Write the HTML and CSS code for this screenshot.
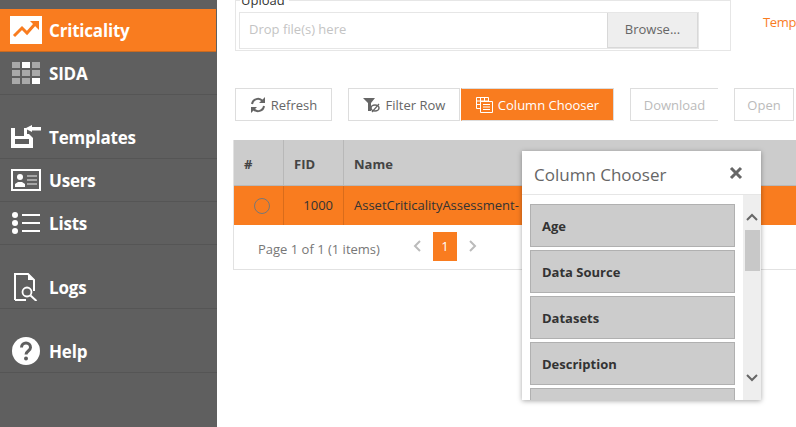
FILE: index.html
```html
<!DOCTYPE html>
<html lang="en">
<head>
    <meta charset="UTF-8">
    <meta name="viewport" content="width=device-width, initial-scale=1.0">
    <title>Criticality</title>
    <link rel="stylesheet" href="styles.css">
</head>
<body>
    <div class="sidebar">
        <div class="nav-group">
            <a class="nav-item active">
                <span class="nav-icon">
                    <svg width="32" height="28" viewBox="0 0 32 28"><rect width="32" height="28" fill="#fff"/><path d="M4 20l8-8 5 5 8-9" fill="none" stroke="#f97c1f" stroke-width="3"/><path d="M20 5h9v9z" fill="#f97c1f"/></svg>
                </span>
                Criticality
            </a>
            <a class="nav-item">
                <span class="nav-icon">
                    <svg width="28" height="22" viewBox="0 0 28 22">
                        <path fill="#a9a9a9" d="M0 0h8v6H0zM20 0h8v6h-8zM0 8h8v6H0zM10 8h8v6h-8zM20 8h8v6h-8zM0 16h8v6H0zM10 16h8v6h-8z"/>
                        <path fill="#fff" d="M10 0h8v6h-8zM20 16h8v6h-8z"/>
                    </svg>
                </span>
                SIDA
            </a>
        </div>
        <div class="nav-group">
            <a class="nav-item">
                <span class="nav-icon">
                    <svg width="30" height="24" viewBox="0 0 30 24"><path fill="#fff" fill-rule="evenodd" d="M0 3h4v8h9V3h3v6h2l4 4v10H0zM4 14v5h14v-5z"/><path fill="#fff" d="M14 3.500L21 0v2h9v3.500h-9V7z"/></svg>
                </span>
                Templates
            </a>
            <a class="nav-item">
                <span class="nav-icon">
                    <svg width="30" height="22" viewBox="0 0 30 22"><rect x="1" y="1" width="28" height="20" fill="none" stroke="#fff" stroke-width="2"/><circle cx="9" cy="8" r="3" fill="#fff"/><path fill="#fff" d="M4 18v-3l3-2h4l3 2v3z"/><path stroke="#bdbdbd" stroke-width="1.6" d="M16 7h10M16 11h10M16 15h10"/></svg>
                </span>
                Users
            </a>
            <a class="nav-item">
                <span class="nav-icon">
                    <svg width="28" height="22" viewBox="0 0 28 22"><circle cx="3" cy="3" r="3" fill="#fff"/><circle cx="3" cy="11" r="3" fill="#fff"/><circle cx="3" cy="19" r="3" fill="#fff"/><path stroke="#fff" stroke-width="2" d="M10 3h18M10 11h18M10 19h18"/></svg>
                </span>
                Lists
            </a>
        </div>
        <div class="nav-group">
            <a class="nav-item">
                <span class="nav-icon">
                    <svg width="24" height="28" viewBox="0 0 24 28"><path d="M1 27V1h13l6 6v11M1 27h11" fill="none" stroke="#fff" stroke-width="2"/><path d="M14 1l6 6h-6z" fill="#fff"/><circle cx="13" cy="19" r="4.500" fill="none" stroke="#fff" stroke-width="1.800"/><path d="M16.500 22.500l6 5.500" stroke="#fff" stroke-width="2"/></svg>
                </span>
                Logs
            </a>
        </div>
        <div class="nav-group">
            <a class="nav-item">
                <span class="nav-icon">
                    <svg width="28" height="28" viewBox="0 0 28 28"><circle cx="14" cy="14" r="14" fill="#fff"/><path d="M9.500 10.500c0-6 9-6 9 0 0 3.500-4.500 3.500-4.500 7" fill="none" stroke="#5f5f5f" stroke-width="3"/><circle cx="14" cy="21.500" r="2" fill="#5f5f5f"/></svg>
                </span>
                Help
            </a>
        </div>
    </div>

    <div class="main">
        <div class="upload-row">
            <fieldset class="upload">
                <legend>Upload</legend>
                <div class="file-input">
                    <div class="drop">Drop file(s) here</div>
                    <div class="browse">Browse...</div>
                </div>
            </fieldset>
            <a class="templates-link">Temp</a>
        </div>

        <div class="toolbar">
            <button class="btn btn-refresh">
                <svg width="16" height="16" viewBox="0 0 16 16"><path d="M2 7a6 6 0 0 1 10.500-3M14 9a6 6 0 0 1-10.500 3" fill="none" stroke="#666" stroke-width="2"/><path d="M15 0v6H9zM1 16v-6h6z" fill="#666"/></svg>
                Refresh
            </button>
            <div class="btn-pair">
                <button class="btn btn-filter">
                    <svg width="18" height="16" viewBox="0 0 18 16"><path d="M0 1h12L8 6v8H5V6z" fill="#666"/><ellipse cx="12" cy="11" rx="4" ry="3" fill="none" stroke="#666" stroke-width="1.500"/><path d="M9 15l7-8" stroke="#666" stroke-width="1.200"/></svg>
                    Filter Row
                </button>
                <button class="btn btn-active">
                    <svg width="17" height="16" viewBox="0 0 17 16"><path d="M.5.500h12v11H.5zM.5 4h12M.5 7.500h12M4.500.5v11M8.500.5v11" fill="none" stroke="#fff"/><path d="M4.500 4.500h12v11h-12z" fill="#f97c1f" stroke="#fff"/><path d="M7 7.500h7M7 10h7M7 12.500h7" stroke="#fff"/></svg>
                    Column Chooser
                </button>
            </div>
            <button class="btn btn-disabled btn-download">Download</button>
            <button class="btn btn-disabled btn-open">Open</button>
        </div>

        <div class="grid">
            <div class="grid-row grid-head">
                <div class="cell col-num">#</div>
                <div class="cell col-fid">FID</div>
                <div class="cell col-name">Name</div>
            </div>
            <div class="grid-row grid-selected">
                <div class="cell col-num"><span class="radio"></span></div>
                <div class="cell col-fid">1000</div>
                <div class="cell col-name">AssetCriticalityAssessment-</div>
            </div>
            <div class="pager">
                <span class="pager-info">Page 1 of 1 (1 items)</span>
                <svg class="chev" width="8" height="12" viewBox="0 0 8 12"><path d="M7 1L2 6l5 5" fill="none" stroke="#bbb" stroke-width="2"/></svg>
                <span class="page-num">1</span>
                <svg class="chev" width="8" height="12" viewBox="0 0 8 12"><path d="M1 1l5 5-5 5" fill="none" stroke="#bbb" stroke-width="2"/></svg>
            </div>
        </div>

        <div class="chooser">
            <div class="chooser-head">
                <span class="chooser-title">Column Chooser</span>
                <svg width="14" height="14" viewBox="0 0 14 14"><path d="M2 2l10 10M12 2L2 12" stroke="#666" stroke-width="3"/></svg>
            </div>
            <div class="chooser-body">
                <div class="chooser-list">
                    <div class="chooser-item">Age</div>
                    <div class="chooser-item">Data Source</div>
                    <div class="chooser-item">Datasets</div>
                    <div class="chooser-item">Description</div>
                    <div class="chooser-item"></div>
                </div>
                <div class="scrollbar">
                    <svg width="12" height="8" viewBox="0 0 12 8"><path d="M1 7l5-5 5 5" fill="none" stroke="#666" stroke-width="2"/></svg>
                    <div class="thumb"></div>
                    <svg class="arrow-down" width="12" height="8" viewBox="0 0 12 8"><path d="M1 1l5 5 5-5" fill="none" stroke="#666" stroke-width="2"/></svg>
                </div>
            </div>
        </div>
    </div>
</body>
</html>
```

FILE: styles.css
```css
html, body {
    height: 100%;
}

body {
    margin: 0;
    display: flex;
    overflow: hidden;
    background-color: #fff;
    color: #666;
    font-family: "Open Sans", "Liberation Sans", sans-serif;
    font-size: 13px;
}

.sidebar {
    flex: 0 0 217px;
    box-sizing: border-box;
    padding-top: 9px;
    background-color: #5f5f5f;
}

.nav-group {
    margin-bottom: 21px;
}

.nav-item {
    display: flex;
    align-items: center;
    box-sizing: border-box;
    height: 43px;
    border-bottom: 1px solid #555;
    color: #fff;
    font-size: 17px;
    font-weight: 700;
    letter-spacing: -0.2px;
}

.nav-item.active {
    background-color: #f97c1f;
    border-bottom-color: #c96a20;
    margin-right: 1px;
}

.nav-icon {
    display: flex;
    justify-content: center;
    width: 32px;
    margin: 0 7px 0 10px;
}

.main {
    position: relative;
    flex: 1;
    min-width: 0;
    overflow: hidden;
}

.upload-row {
    display: flex;
    align-items: flex-start;
    height: 51px;
    margin-top: -10px;
    padding: 0 0 10px 18px;
}

.upload {
    flex: 0 0 496px;
    box-sizing: border-box;
    height: 61px;
    margin: 0;
    padding: 2px 31px 0 3px;
    border: 1px solid #e6e6e6;
}

.upload legend {
    margin-left: 1px;
    padding: 0 4px 0 1px;
    color: #333;
    font-size: 13px;
    line-height: 20px;
}

.file-input {
    display: flex;
    height: 35px;
    border: 1px solid #e6e6e6;
}

.drop {
    flex: 1;
    padding-left: 9px;
    color: #c4c4c4;
    line-height: 33px;
}

.browse {
    box-sizing: border-box;
    width: 91px;
    background-color: #eee;
    border: 1px solid #d8d8d8;
    border-width: 0 1px 1px 1px;
    text-align: center;
    line-height: 32px;
}

.templates-link {
    margin: 23px 0 0 32px;
    color: #f97c1f;
    font-size: 13px;
    letter-spacing: -0.3px;
    white-space: nowrap;
}

.toolbar {
    display: flex;
    margin: 37px 0 0 18px;
}

.btn {
    display: flex;
    align-items: center;
    justify-content: center;
    gap: 5px;
    box-sizing: border-box;
    height: 33px;
    padding: 0;
    border: 1px solid #ddd;
    background-color: #fff;
    color: #666;
    font-family: inherit;
    font-size: 13px;
}

.btn-refresh {
    width: 97px;
    margin-right: 16px;
}

.btn-pair {
    display: flex;
    gap: 1px;
    margin-right: 16px;
}

.btn-filter {
    width: 112px;
}

.btn-active {
    width: 153px;
    background-color: #f97c1f;
    border-left-color: #f97c1f;
    color: #fff;
}

.btn-disabled {
    color: #bbb;
}

.btn-download {
    width: 88px;
    margin-right: 16px;
    border-right: none;
}

.btn-open {
    width: 60px;
}

.grid {
    margin: 19px 0 0 16px;
    border-bottom: 1px solid #e2e2e2;
    border-left: 1px solid #e2e2e2;
}

.grid-row {
    display: flex;
}

.cell {
    box-sizing: border-box;
    padding: 0 10px;
    border-right: 1px solid #b8b8b8;
}

.grid-head {
    height: 45px;
    border-bottom: 1px solid #b8b8b8;
    background-color: #ccc;
    color: #444;
    font-weight: 700;
    line-height: 49px;
}

.grid-selected {
    height: 39px;
    background-color: #f97c1f;
    color: #333;
    line-height: 38px;
}

.grid-selected .cell {
    border-right-color: #d96c1b;
}

.col-num {
    width: 50px;
}

.col-fid {
    width: 60px;
}

.grid-selected .col-fid {
    text-align: right;
}

.col-name {
    flex: 1;
    border-right: none;
}

.radio {
    display: block;
    box-sizing: border-box;
    width: 16px;
    height: 16px;
    margin: 12px 0 0 10px;
    border: 1px solid #777;
    border-radius: 50%;
}

.pager {
    display: flex;
    align-items: center;
    height: 44px;
    padding-left: 24px;
    color: #777;
}

.pager-info {
    width: 155px;
    margin-top: 4px;
}

.chev {
    margin-top: -2px;
}

.page-num {
    width: 24px;
    height: 29px;
    margin: -1px 12px 0;
    background-color: #f97c1f;
    color: #fff;
    text-align: center;
    line-height: 29px;
}

/* popup over the grid */
.chooser {
    position: absolute;
    top: 151px;
    left: 305px;
    width: 239px;
    height: 249px;
    display: flex;
    flex-direction: column;
    background-color: #fff;
    box-shadow: 0 1px 5px rgba(0, 0, 0, 0.35);
}

.chooser-head {
    display: flex;
    align-items: center;
    justify-content: space-between;
    flex: 0 0 44px;
    box-sizing: border-box;
    padding: 0 18px 0 12px;
    border-bottom: 1px solid #e6e6e6;
}

.chooser-title {
    padding-top: 3px;
    font-size: 17px;
}

.chooser-body {
    display: flex;
    flex: 1;
    min-height: 0;
}

.chooser-list {
    flex: 1;
    overflow: hidden;
    padding: 9px 8px 0;
}

.chooser-item {
    box-sizing: border-box;
    height: 43px;
    margin-bottom: 3px;
    padding-left: 11px;
    border: 1px solid #b0b0b0;
    background-color: #ccc;
    color: #333;
    font-weight: 700;
    line-height: 43px;
}

.scrollbar {
    display: flex;
    flex-direction: column;
    align-items: center;
    flex: 0 0 18px;
    padding-top: 18px;
    background-color: #eee;
    box-sizing: border-box;
}

.thumb {
    width: 15px;
    height: 41px;
    margin-top: 9px;
    background-color: #c8c8c8;
}

.arrow-down {
    margin-top: auto;
    margin-bottom: 18px;
}
```
